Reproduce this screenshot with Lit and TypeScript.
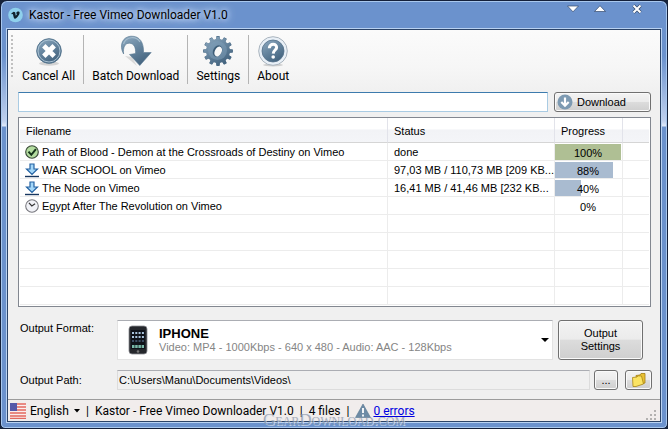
import { LitElement, html, svg, css } from "lit";
import { customElement, state } from "lit/decorators.js";

type Kind = "done" | "active" | "queued";
interface Item { name: string; status: string; progress: number; kind: Kind; }

const ITEMS: Item[] = [
  { name: "Path of Blood - Demon at the Crossroads of Destiny on Vimeo", status: "done", progress: 100, kind: "done" },
  { name: "WAR SCHOOL on Vimeo", status: "97,03 MB / 110,73 MB [209 KB...", progress: 88, kind: "active" },
  { name: "The Node on Vimeo", status: "16,41 MB / 41,46 MB [232 KB...", progress: 40, kind: "active" },
  { name: "Egypt After The Revolution on Vimeo", status: "", progress: 0, kind: "queued" },
];

// Outline of a cog wheel centred on (16,16)
function gearPath(teeth: number, inner: number, outer: number): string {
  const pts: string[] = [];
  const step = (Math.PI * 2) / teeth;
  const at = (a: number, r: number) => `${(16 + Math.cos(a) * r).toFixed(2)} ${(16 + Math.sin(a) * r).toFixed(2)}`;
  for (let i = 0; i < teeth; i++) {
    const a = i * step;
    pts.push(at(a - step * 0.3, inner), at(a - step * 0.2, outer), at(a + step * 0.2, outer), at(a + step * 0.3, inner));
  }
  return `M${pts.join("L")}Z`;
}

const steel = (id: string) => svg`<defs><linearGradient id=${id} x1="0" y1="0" x2="0.6" y2="1">
  <stop offset="0" stop-color="#8fabc1"/><stop offset="0.55" stop-color="#64839d"/><stop offset="1" stop-color="#456580"/>
</linearGradient></defs>`;

const cancelIcon = html`<svg viewBox="0 0 32 32" width="32" height="32" aria-hidden="true">
  ${steel("g1")}
  <ellipse cx="16" cy="28.5" rx="10" ry="2.2" fill="#d3d3d3"/>
  <circle cx="16" cy="16" r="12.3" fill="url(#g1)" stroke="#56768f" stroke-width="1"/>
  <circle cx="16" cy="16" r="11" fill="none" stroke="#a9c1d2" stroke-width="1"/>
  <path d="M12.500 12.500l7 7M19.500 12.500l-7 7" stroke="#fff" stroke-width="4.800" stroke-linecap="square"/>
</svg>`;

const batchIcon = html`<svg viewBox="0 0 32 32" width="32" height="32" aria-hidden="true">
  ${steel("g2")}
  <path d="M5 21L17 31L12 22Z" fill="#d9d9d9"/>
  <path d="M3.600 19C-1.500 10 3 1.500 11 1.200C20 .8 24 8 23.500 17.500H31.200L19.800 30.500L9.500 19.500L15.500 18.500C16 12.500 14 8.500 9.500 8.200C5 8 2.800 12.500 3.600 19Z" fill="url(#g2)" stroke="#587791" stroke-width=".6"/>
  <path d="M3.500 9C6 1.500 16 .5 20 7" fill="none" stroke="#a4bccd" stroke-width="1.200"/>
</svg>`;

const gearIcon = html`<svg viewBox="0 0 32 32" width="32" height="32" aria-hidden="true">
  ${steel("g3")}
  <path d=${gearPath(12, 11.8, 15)} fill="#4c6b85"/>
  <path d=${gearPath(12, 11.8, 14.4)} fill="url(#g3)"/>
  <circle cx="15.500" cy="15.500" r="9.500" fill="#7fa0ba" opacity=".5"/>
  <ellipse cx="15.500" cy="16" rx="4.400" ry="6" transform="rotate(28 15.500 16)" fill="#3d5d77"/>
  <ellipse cx="16.200" cy="16.500" rx="3.400" ry="5.200" transform="rotate(28 16.200 16.500)" fill="#f8f8f8"/>
</svg>`;

const aboutIcon = html`<svg viewBox="0 0 32 32" width="32" height="32" aria-hidden="true">
  ${steel("g4")}
  <ellipse cx="16" cy="30" rx="10" ry="1.500" fill="#cfcfcf"/>
  <circle cx="16" cy="16" r="14.300" fill="#e9f0f7" stroke="#a9b4be" stroke-width="1"/>
  <circle cx="16" cy="16" r="11" fill="url(#g4)" stroke="#547089" stroke-width=".8"/>
  <path d="M12.300 13.200C12.300 8 20 8.200 19.600 12.600C19.400 15 16.300 15.200 16.200 18.600" fill="none" stroke="#fff" stroke-width="3"/>
  <circle cx="16.200" cy="22" r="1.800" fill="#fff"/>
</svg>`;

const icons = {
  done: html`<svg viewBox="0 0 16 16" width="14" height="16" aria-hidden="true">
    <circle cx="8" cy="8" r="7.200" fill="#b4dda0" stroke="#3b4a3a" stroke-width="1.300"/>
    <path d="M4 7.500L7.200 11.200L12.500 4.600" fill="none" stroke="#16351b" stroke-width="2.300"/></svg>`,
  active: html`<svg viewBox="0 0 14 16" width="14" height="16" aria-hidden="true">
    <path d="M5 2h4v5h3.500L7 12.500L1.500 7H5Z" fill="#a4d7f8" stroke="#2563a3" stroke-width="1.200"/>
    <path d="M0 14.500h14" stroke="#17365f" stroke-width="1.400"/></svg>`,
  queued: html`<svg viewBox="0 0 16 16" width="14" height="16" aria-hidden="true">
    <circle cx="8" cy="8" r="7.200" fill="#f1f2f7" stroke="#77777d" stroke-width="1.200"/>
    <path d="M4.500 4.500L7.800 8L11.500 5.500" fill="none" stroke="#333" stroke-width="1.400"/></svg>`,
};

@customElement("app-root")
export class AppRoot extends LitElement {
  @state() private items = ITEMS;

  static styles = css`
    :host { display: block; font: 11px/16px "Liberation Sans", Arial, sans-serif; color: #000; background: #16233a; }
    * { box-sizing: border-box; }
    svg { display: block; flex: none; }
    button, input, select { font: inherit; color: inherit; margin: 0; outline: none; }
    .window {
      position: relative; min-height: 100vh; display: flex; flex-direction: column;
      padding: 0 6px 6px; border: 1px solid #14203a; border-radius: 7px 7px 5px 5px;
      box-shadow: inset 0 0 0 1px #a9c8ee;
      background: linear-gradient(#6b92cd 0, #6b92cd 55px, #bfd0ee 120px, #e0eafa 125px, #6b92cd 126px);
    }
    .titlebar { display: flex; align-items: center; height: 28px; padding: 0 18px 0 1px; flex: none; }
    .title { flex: 1; margin: 0 0 0 6px; font: 12px/16px Roboto, "Open Sans", sans-serif;
      text-shadow: 0 0 5px #d5e3fa, 0 0 8px #c6d8f5, 0 0 10px #c6d8f5; }
    .controls { display: flex; gap: 15px; align-self: flex-start; }
    .controls button { width: 12px; height: 16px; padding: 0; border: 0; background: none; }
    .controls button:last-child { margin-left: 10px; }
    .client { flex: 1; display: flex; flex-direction: column; border: 1px solid #2b4367;
      outline: 1px solid #b9d2f2; background: #f0f0f0; }
    .toolbar { display: flex; align-items: flex-start; height: 62px; padding: 5px 3px;
      background: linear-gradient(#fbfbfb, #f6f6f6 60%, #f0f0f0); }
    .grip { width: 2px; height: 44px; margin-right: 1px; background: repeating-linear-gradient(#c0c0c0 0 2px, transparent 2px 4px); }
    .tool { display: flex; flex-direction: column; align-items: center; padding: 0 8px; border: 0; background: none; gap: 1px;
      font: 12px/16px Roboto, "Open Sans", sans-serif; white-space: nowrap; }
    .tool + .tool { border-left: 1px solid #b4b4b4; }
    .main { flex: 1; display: flex; flex-direction: column; padding: 0 9px 0 10px; }
    .urlrow { display: flex; gap: 6px; height: 20px; }
    .url { flex: 1; min-width: 0; border: 1px solid #a9cbe3; border-top-color: #3d7bad; background: #fff; padding: 0 4px; }
    .btn { display: flex; align-items: center; justify-content: center; border: 1px solid #707070; border-radius: 3px;
      background: linear-gradient(#f3f3f3, #ebebeb 48%, #dcdcdc 50%, #cfcfcf); box-shadow: inset 0 0 0 1px #fafafa; padding: 0; }
    .download { width: 97px; gap: 4px; justify-content: flex-start; padding: 0 2px; }
    .list { flex: 1; margin-top: 5px; border: 1px solid #828790; background: #fff; padding: 0 1px; }
    table { width: 100%; table-layout: fixed; border-collapse: separate; border-spacing: 0; }
    .c-status { width: 167px; } .c-progress { width: 68px; } .c-rest { width: 26px; }
    th { height: 25px; padding: 2px 6px 0; font-weight: normal; text-align: left; border-right: 1px solid #e2e3ea;
      border-bottom: 1px solid #d5d5d5; background: linear-gradient(#fff 45%, #f2f3f6 50%, #f4f5f8); }
    td { height: 18px; padding: 0 6px; border-right: 1px solid #ececec; border-bottom: 1px solid #ececec;
      white-space: nowrap; overflow: hidden; text-overflow: ellipsis; }
    th:last-child, td:last-child { border-right: 0; }
    td.status { padding-right: 0; }
    .file { display: flex; align-items: center; gap: 3px; margin-left: -1px; height: 17px; }
    td.pcell { padding: 0 1px 0 0; }
    .bar { display: grid; height: 16px; text-align: center; }
    .fill, .pct { grid-area: 1 / 1; }
    .fill { background: #a9bbd0; }
    .fill.done { background: #afbf94; }
    .pct { line-height: 18px; }
    .form { display: grid; grid-template-columns: 99px 1fr; row-gap: 10px; padding: 13px 0 9px; }
    .label { padding: 0 2px; }
    .format, .path { display: flex; }
    .format { gap: 5px; padding-right: 8px; }
    .combo { flex: 1; display: flex; align-items: center; height: 40px; padding: 0 2px 0 10px; background: #fff;
      border: 1px solid #e3e3e3; border-top-color: #abadb3; }
    .texts { flex: 1; min-width: 0; padding-left: 11px; }
    .device { display: block; width: 100%; height: 14px; padding: 0; border: 0; background: none; appearance: none; font: bold 13px/14px "Liberation Sans", Arial, sans-serif; }
    .desc { color: #858585; line-height: 12px; white-space: nowrap; }
    .settings { width: 85px; height: 40px; line-height: 13px; }
    .label.lower { padding-top: 2px; }
    .path { gap: 4px; margin-right: -1px; }
    .pathbox { flex: 1; min-width: 0; height: 20px; padding: 0 1px; background: #f0f0f0; border: 1px solid #dcdcdc; border-top-color: #abadb3; }
    .dots { width: 24px; height: 20px; }
    .folder { width: 27px; height: 20px; margin-left: 3px; }
    .statusbar { display: flex; align-items: center; height: 22px; padding: 0 2px; border-top: 1px solid #9c9c9c; background: #f1edec;
      font: 12px/16px Roboto, "Open Sans", sans-serif; white-space: nowrap; }
    .lang { display: flex; align-items: center; }
    .lang select { appearance: none; border: 0; background: none; padding: 0; margin: 0 5px 0 4px; }
    .sep { margin: 0 6px; }
    a { color: #0000e0; margin-left: 2px; }
    .size { margin-left: auto; align-self: flex-end; }
    .mark { position: absolute; left: 0; right: 0; bottom: 0; text-align: center; font: small-caps 17px/16px "Liberation Serif", serif;
      color: #8792a6; text-shadow: 1px 1px #dfe5ef; opacity: .7; pointer-events: none; }
  `;

  private row(i: Item) {
    return html`<tr>
      <td><div class="file">${icons[i.kind]}<span>${i.name}</span></div></td>
      <td class="status">${i.status}</td>
      <td class="pcell"><div class="bar"><div class="fill ${i.kind}" style="width:${i.progress}%"></div><span class="pct">${i.progress}%</span></div></td>
      <td></td></tr>`;
  }

  render() {
    return html`
      <div class="window">
        <header class="titlebar">
          <svg viewBox="0 0 16 16" width="15" height="16" aria-hidden="true">
            <circle cx="8" cy="8" r="7.800" fill="#8ed0ec"/>
            <path d="M3.500 6.500L6 4.500L7.600 5L8.300 8.800L9.700 6.800L8.600 6.200C9.200 3.800 12.500 3.800 12.400 5.700C12.200 8.200 9.300 11.900 7.600 11.900C6 11.900 5.800 8.800 5.200 6.800L4 7.200Z" fill="#10222d"/>
          </svg>
          <h1 class="title">Kastor - Free Vimeo Downloader V1.0</h1>
          <div class="controls">
            <button aria-label="Minimize"><svg viewBox="0 0 12 16" width="12" height="16"><path d="M.5 5h11L6 10.800Z" fill="#fff" stroke="#34496b" stroke-width=".7"/></svg></button>
            <button aria-label="Maximize"><svg viewBox="0 0 12 16" width="12" height="16"><path d="M.5 10.500h11L6 4.700Z" fill="#fff" stroke="#34496b" stroke-width=".7"/></svg></button>
            <button aria-label="Close"><svg viewBox="0 0 12 16" width="12" height="16"><path d="M2.500 4.500l7 7M9.500 4.500l-7 7" stroke="#34496b" stroke-width="3.200"/><path d="M2.500 4.500l7 7M9.500 4.500l-7 7" stroke="#fff" stroke-width="2"/></svg></button>
          </div>
        </header>
        <div class="client">
          <nav class="toolbar">
            <span class="grip"></span>
            <button class="tool">${cancelIcon}Cancel All</button>
            <button class="tool">${batchIcon}Batch Download</button>
            <button class="tool">${gearIcon}Settings</button>
            <button class="tool">${aboutIcon}About</button>
          </nav>
          <main class="main">
            <div class="urlrow">
              <input class="url" type="text" aria-label="Video address">
              <button class="btn download"><svg viewBox="0 0 16 16" width="16" height="16" aria-hidden="true"><circle cx="8" cy="8" r="7.500" fill="#7d9ab2"/><path d="M8 3.500v8M4.300 8L8 11.700L11.700 8" fill="none" stroke="#fff" stroke-width="2.200"/></svg>Download</button>
            </div>
            <div class="list">
              <table>
                <colgroup><col><col class="c-status"><col class="c-progress"><col class="c-rest"></colgroup>
                <thead><tr><th>Filename</th><th>Status</th><th>Progress</th><th></th></tr></thead>
                <tbody>
                  ${this.items.map((i) => this.row(i))}
                  ${Array.from({ length: 5 }, () => html`<tr><td></td><td></td><td></td><td></td></tr>`)}
                </tbody>
              </table>
            </div>
            <div class="form">
              <label class="label" for="format">Output Format:</label>
              <div class="format">
                <div class="combo">
                  <svg viewBox="0 0 20 30" width="20" height="30" aria-hidden="true">
                    <rect x="1" y="1" width="18" height="28" rx="3" fill="#25272c" stroke="#8b8d92" stroke-width=".8"/>
                    <rect x="3" y="5" width="14" height="19" fill="#10131a"/>
                    <path d="M4 8h12M4 12h12" stroke="#a9c4dc" stroke-width="2" stroke-dasharray="2 1.300"/>
                    <path d="M4 16h12" stroke="#4f6680" stroke-width="1.500" stroke-dasharray="2 1.300"/>
                    <path d="M4 21.500h12" stroke="#79b9a8" stroke-width="3" stroke-dasharray="2.500 .7"/>
                    <circle cx="10" cy="26.500" r="1.300" fill="#777"/>
                  </svg>
                  <div class="texts">
                    <select class="device" id="format"><option>IPHONE</option></select>
                    <div class="desc">Video: MP4 - 1000Kbps - 640 x 480 - Audio: AAC - 128Kbps</div>
                  </div>
                  <svg viewBox="0 0 10 6" width="10" height="6" aria-hidden="true"><path d="M1 1h8L5 5Z"/></svg>
                </div>
                <button class="btn settings">Output<br>Settings</button>
              </div>
              <label class="label lower" for="path">Output Path:</label>
              <div class="path">
                <input class="pathbox" id="path" type="text" readonly value="C:\\Users\\Manu\\Documents\\Videos\\">
                <button class="btn dots">...</button>
                <button class="btn folder" aria-label="Open folder"><svg viewBox="0 0 16 16" width="16" height="16"><path d="M5 3.500L9 3L10 1.500L14 1.500V11L6 13Z" fill="#e8c135" stroke="#a57f12" stroke-width=".8"/><path d="M1.500 5.500L6 5L7 3.800L10.500 4L12.500 12L5 14.500H2Z" fill="#fbe463" stroke="#ab8615" stroke-width=".8"/></svg></button>
              </div>
            </div>
          </main>
          <footer class="statusbar">
            <label class="lang">
              <svg viewBox="0 0 16 16" width="16" height="16" aria-hidden="true"><rect width="16" height="16" fill="#fbeeee"/><path d="M0 1h16M0 4h16M0 7h16M0 10h16M0 13h16M0 15.500h16" stroke="#e2685f" stroke-width="1.500"/><rect width="7" height="8" fill="#5658a8"/></svg>
              <select aria-label="Language"><option>English</option></select>
              <svg viewBox="0 0 6 4" width="6" height="4" aria-hidden="true"><path d="M0 0h6L3 3.500Z"/></svg>
            </label>
            <span class="sep">|</span><span>Kastor - Free Vimeo Downloader V1.0</span>
            <span class="sep">|</span><span>4 files</span><span class="sep">|</span>
            <svg viewBox="0 0 16 16" width="16" height="16" aria-hidden="true"><path d="M8 1L15.500 14.500H.5Z" fill="#6d8ba5" stroke="#587791" stroke-width=".6"/><path d="M8 5v5M8 11.500v2" stroke="#fff" stroke-width="1.800"/></svg>
            <a href="#errors">0 errors</a>
            <svg class="size" viewBox="0 0 12 12" width="12" height="12" aria-hidden="true"><path d="M8 1h2v2H8zM4 5h2v2H4zM8 5h2v2H8zM0 9h2v2H0zM4 9h2v2H4zM8 9h2v2H8z" fill="#b3b1b0"/></svg>
          </footer>
        </div>
        <div class="mark">GearDownload.com</div>
      </div>`;
  }
}
